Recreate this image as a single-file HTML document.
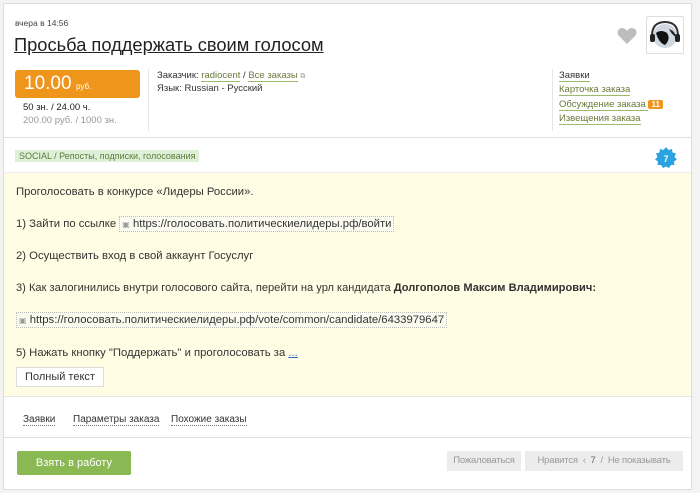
<!DOCTYPE html>
<html><head><meta charset="utf-8"><style>
*{margin:0;padding:0;box-sizing:border-box}
body{width:700px;height:493px;background:#f3f3f3;font-family:"Liberation Sans","DejaVu Sans",sans-serif;font-size:11px;color:#333;position:relative;overflow:hidden}
.card{position:absolute;left:3px;top:3px;width:689px;height:487px;background:#fff;border:1px solid #ddd;border-radius:2px}
.a{position:absolute;white-space:nowrap}
.lnk{color:#6a7a3a;text-decoration:none;border-bottom:1px solid #9cba6a}
.hr{position:absolute;left:0;width:687px;height:1px;background:#e0e0e0}
.code{border:1px dotted #bbb;background:#fbfbf0;padding:1px 2px;font-size:11.3px}
.tab{border-bottom:1px dotted #777;color:#333;font-size:10px}
.gbtn{background:#ececec;color:#999;font-size:9.5px;height:20px;line-height:20px;position:absolute;top:447px;white-space:nowrap;text-align:center;letter-spacing:-0.2px}
.t{font-size:11.3px}
</style></head><body>
<div class="card">
<div class="a" style="left:11px;top:14px;font-size:8.5px;color:#444">вчера в 14:56</div>
<div class="a" style="left:10px;top:30px;font-size:18.3px;color:#222;text-decoration:underline">Просьба поддержать своим голосом</div>
<svg class="a" style="left:613px;top:23px" width="20" height="18" viewBox="0 0 20 18"><path d="M10 17 L2 9 C-1 6 1 1 5 1 C7.5 1 9 2.5 10 4 C11 2.5 12.5 1 15 1 C19 1 21 6 18 9 Z" fill="#bdbdbd"/></svg>
<div class="a" style="left:642px;top:12px;width:38px;height:38px;border:1px solid #ddd;border-radius:2px;background:#fff">
<svg width="36" height="36" viewBox="0 0 36 36"><circle cx="18" cy="19" r="12" fill="#cfd8e0"/><path d="M9 16 Q14 12 20 16 Q24 22 18 28 Q12 26 9 16Z" fill="#111"/><path d="M22 12 Q28 14 29 20 Q25 18 22 12Z" fill="#222"/><path d="M5 19 Q5 5 18 5 Q31 5 31 19" stroke="#333" stroke-width="2" fill="none"/><rect x="3" y="17" width="5" height="8" rx="2" fill="#222"/><rect x="28" y="17" width="5" height="8" rx="2" fill="#222"/></svg></div>
<div class="a" style="left:11px;top:66px;width:125px;height:28px;background:#ef951c;border-radius:3px;color:#fff"><span style="position:absolute;left:9px;top:3px;font-size:19px">10.00</span><span style="position:absolute;left:61px;top:12px;font-size:8px">руб.</span></div>
<div class="a" style="left:19px;top:98px;font-size:9.5px;color:#222">50 зн. / 24.00 ч.</div>
<div class="a" style="left:19px;top:111px;font-size:9.5px;color:#999">200.00 руб. / 1000 зн.</div>
<div class="a" style="left:144px;top:65px;width:1px;height:62px;background:#e6e6e6"></div>
<div class="a" style="left:153px;top:66px;font-size:9.5px">Заказчик: <span class="lnk">radiocent</span> / <span class="lnk">Все заказы</span> <span style="color:#999;font-size:7px">⧉</span></div>
<div class="a" style="left:153px;top:79px;font-size:9.5px">Язык: Russian - Русский</div>
<div class="a" style="left:548px;top:65px;width:1px;height:62px;background:#e6e6e6"></div>
<div class="a" style="left:555px;top:65px;font-size:9.5px;line-height:14.3px">
<span class="lnk" style="color:#333">Заявки</span><br><span class="lnk">Карточка заказа</span><br><span class="lnk">Обсуждение заказа </span><span style="background:#ef951c;color:#fff;font-size:8px;padding:0 3px;border-radius:2px;font-weight:bold">11</span><br><span class="lnk">Извещения заказа</span></div>
<div class="hr" style="top:133px"></div>
<div class="a" style="left:11px;top:146px;background:#dff0d8;color:#5b7a3a;font-size:9px;padding:1px 4px">SOCIAL / Репосты, подписки, голосования</div>
<svg class="a" style="left:651px;top:143px" width="22" height="22" viewBox="0 0 22 22"><polygon points="11,0 13.5,3 17,2 17.5,5.5 21,6.5 19.5,10 22,12.5 19,14.5 19.5,18 16,18 14,21 11,19.5 8,21 6,18 2.5,18 3,14.5 0,12.5 2.5,10 1,6.5 4.5,5.5 5,2 8.5,3" fill="#2aa3e0"/><text x="11" y="15" text-anchor="middle" font-size="9" font-weight="bold" fill="#fff" font-family="Liberation Sans">7</text></svg>
<div class="a" style="left:0;top:168px;width:687px;height:225px;background:#fffde3;border-top:1px solid #eee;border-bottom:1px solid #e6e6e6"></div>
<div class="a t" style="left:12px;top:182px">Проголосовать в конкурсе «Лидеры России».</div>
<div class="a t" style="left:12px;top:214px">1) Зайти по ссылке <span class="code"><span style="color:#999;font-size:8px">▣</span> https://голосовать.политическиелидеры.рф/войти</span></div>
<div class="a t" style="left:12px;top:246px">2) Осуществить вход в свой аккаунт Госуслуг</div>
<div class="a t" style="left:12px;top:278px;font-size:11.1px">3) Как залогинились внутри голосового сайта, перейти на урл кандидата <b>Долгополов Максим Владимирович:</b></div>
<div class="a t" style="left:12px;top:310px"><span class="code"><span style="color:#999;font-size:8px">▣</span> https://голосовать.политическиелидеры.рф/vote/common/candidate/6433979647</span></div>
<div class="a t" style="left:12px;top:343px">5) Нажать кнопку "Поддержать" и проголосовать за <span style="color:#36c;text-decoration:underline">...</span></div>
<div class="a" style="left:12px;top:363px;width:88px;height:20px;border:1px solid #ddd;background:#fff;text-align:center;line-height:18px;font-size:11px">Полный текст</div>
<div class="a" style="left:19px;top:409px"><span class="tab">Заявки</span></div>
<div class="a" style="left:69px;top:409px"><span class="tab">Параметры заказа</span></div>
<div class="a" style="left:167px;top:409px"><span class="tab">Похожие заказы</span></div>
<div class="hr" style="top:433px"></div>
<div class="a" style="left:13px;top:447px;width:114px;height:24px;background:#8ab852;border-radius:2px;color:#fff;text-align:center;line-height:24px;font-size:11px">Взять в работу</div>
<div class="gbtn" style="left:443px;width:74px">Пожаловаться</div>
<div class="gbtn" style="left:521px;width:158px">Нравится &nbsp;‹ &nbsp;<span style="color:#666">7</span> &nbsp;/ &nbsp;Не показывать</div>
</div>
</body></html>
